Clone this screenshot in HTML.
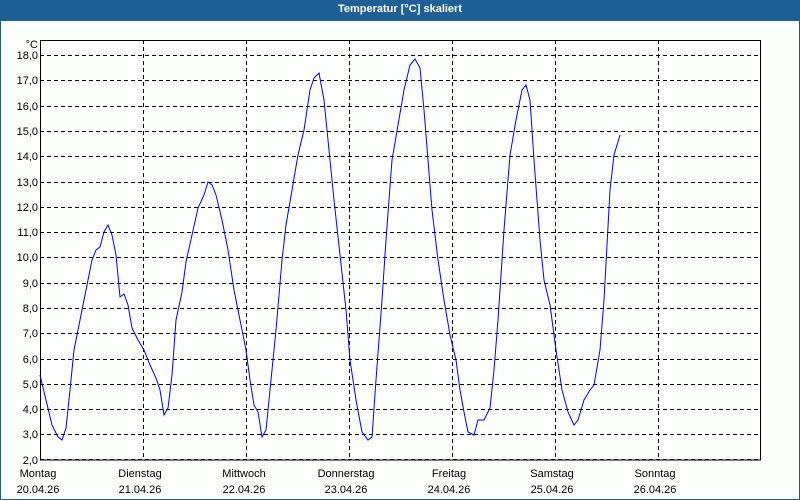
<!DOCTYPE html>
<html><head><meta charset="utf-8"><style>
html,body{margin:0;padding:0;}
body{width:800px;height:500px;overflow:hidden;background:#1e5f96;position:relative;font-family:"Liberation Sans",sans-serif;}
#t{position:absolute;left:0;top:0;width:800px;height:20px;color:#fff;font-weight:bold;font-size:11px;text-align:center;line-height:18px;}
#p{position:absolute;left:1px;top:21px;width:798px;height:478px;background:#fcfefc;}
svg{position:absolute;left:0;top:0;}
</style></head><body>
<div id="t">Temperatur [°C] skaliert</div>
<div id="p"></div>
<svg width="800" height="500" font-family="Liberation Sans, sans-serif" font-size="11" fill="#000">
<g stroke="#000" stroke-width="1" stroke-dasharray="4,3" fill="none" shape-rendering="crispEdges">
<path d="M143.5 40V460M246.5 40V460M349.5 40V460M452.5 40V460M555.5 40V460M658.5 40V460"/>
<path d="M40 55.5H761M40 80.5H761M40 106.5H761M40 131.5H761M40 156.5H761M40 182.5H761M40 207.5H761M40 232.5H761M40 257.5H761M40 283.5H761M40 308.5H761M40 333.5H761M40 359.5H761M40 384.5H761M40 409.5H761M40 434.5H761M40 459.5H761"/>
</g>
<rect x="40.5" y="40.5" width="720" height="419.5" fill="none" stroke="#000" shape-rendering="crispEdges"/>
<g text-anchor="end">
<text x="38" y="48">°C</text>
<text x="38" y="59">18,0</text><text x="38" y="84">17,0</text><text x="38" y="110">16,0</text><text x="38" y="135">15,0</text>
<text x="38" y="160">14,0</text><text x="38" y="186">13,0</text><text x="38" y="211">12,0</text><text x="38" y="236">11,0</text>
<text x="38" y="261">10,0</text><text x="38" y="287">9,0</text><text x="38" y="312">8,0</text><text x="38" y="337">7,0</text>
<text x="38" y="363">6,0</text><text x="38" y="388">5,0</text><text x="38" y="413">4,0</text><text x="38" y="438">3,0</text><text x="38" y="464">2,0</text>
</g>
<g text-anchor="middle">
<text x="38" y="477">Montag</text><text x="38" y="493">20.04.26</text>
<text x="140" y="477">Dienstag</text><text x="140" y="493">21.04.26</text>
<text x="244" y="477">Mittwoch</text><text x="244" y="493">22.04.26</text>
<text x="346" y="477">Donnerstag</text><text x="346" y="493">23.04.26</text>
<text x="449" y="477">Freitag</text><text x="449" y="493">24.04.26</text>
<text x="552" y="477">Samstag</text><text x="552" y="493">25.04.26</text>
<text x="655" y="477">Sonntag</text><text x="655" y="493">26.04.26</text>
</g>
<polyline fill="none" stroke="#0000ff" stroke-width="1" points="40,375 46,400 52,425 58,437 62,440 66,428 70,390 74,350 80,320 86,290 92,260 96,250 100,247 104,232 108,225 112,235 116,255 120,297 124,294 128,305 132,328 138,340 144,350 150,365 156,378 160,390 164,415 168,408 172,375 176,320 182,292 186,262 192,235 198,208 204,195 208,182 212,185 216,195 222,220 228,250 234,290 240,320 246,350 250,380 254,405 258,412 262,437 266,430 270,390 276,330 282,260 286,225 292,190 298,155 304,130 310,90 314,78 319,73 324,100 328,140 334,200 340,255 346,310 350,360 356,400 362,432 368,440 372,437 376,380 382,300 386,240 392,160 398,125 404,90 410,65 415,59 420,68 424,110 428,160 432,210 438,260 444,300 450,335 456,360 460,390 464,412 468,432 474,435 478,420 484,420 490,408 494,370 498,320 504,230 510,155 516,120 522,90 526,85 530,100 534,160 540,240 544,280 550,305 556,350 562,390 568,412 574,425 578,420 584,400 590,390 594,385 600,350 604,300 610,190 614,155 620,135"/>
</svg>
</body></html>
